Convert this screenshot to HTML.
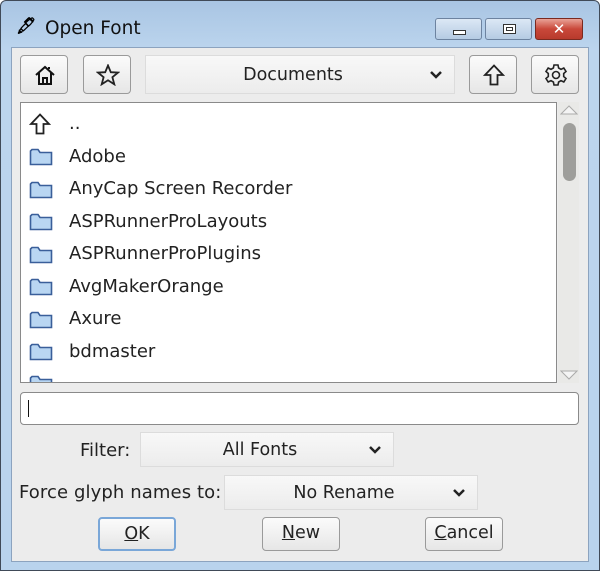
<!DOCTYPE html>
<html><head><style>
*{box-sizing:border-box;margin:0;padding:0}
body{width:600px;height:571px;overflow:hidden;font-family:"DejaVu Sans","Liberation Sans",sans-serif;background:#fff}
.win{position:absolute;left:0;top:0;width:600px;height:571px;border:1px solid #404a58;border-radius:6px 6px 0 0;background:linear-gradient(#a9c5e3,#bcd5ee 50px,#b9d3ed);}
.title{position:absolute;left:44px;top:17px;font-size:18.5px;color:#111}
.client{position:absolute;left:11px;top:47px;width:578px;height:515px;background:#ececec;border:1px solid #8ca3bf}
.abs{position:absolute}
.btn{position:absolute;border:1px solid #9a9a9a;border-radius:4px;background:linear-gradient(#fbfbfb,#e6e6e6);}
.combo{position:absolute;background:linear-gradient(#f8f8f8,#ececec);border:1px solid #dcdcdc;font-size:17.5px;color:#222;text-align:center;padding-right:14px}
.chev{position:absolute;right:12px;top:50%;margin-top:-4px}
.item{position:absolute;left:48px;font-size:18px;color:#222}
.fold{position:absolute;left:8px;width:24px;height:19px}
.pb{position:absolute;font-size:17.5px;color:#222;text-align:center;line-height:31px}
u{text-decoration:underline}
</style></head><body>
<div class="win">
 <div class="abs" style="left:15px;top:15px;font-size:16px;font-weight:bold">&#x1F58B;</div>
 <div class="title">Open Font</div>
 <div class="abs" style="left:434px;top:17px;width:47px;height:22px;border:1px solid #6d83a0;border-radius:3px;background:linear-gradient(#dce8f5,#b5cbe3)"><div class="abs" style="left:17px;top:11px;width:13px;height:5px;border:1px solid #333;background:#fff"></div></div>
 <div class="abs" style="left:484px;top:17px;width:47px;height:22px;border:1px solid #6d83a0;border-radius:3px;background:linear-gradient(#dce8f5,#b5cbe3)"><div class="abs" style="left:17px;top:5px;width:13px;height:10px;border:1px solid #333;background:#fff"><div class="abs" style="left:2px;top:2px;width:7px;height:4px;border:1px solid #333"></div></div></div>
 <div class="abs" style="left:534px;top:17px;width:48px;height:22px;border:1px solid #7a2a20;border-radius:3px;background:linear-gradient(#e9a397,#c9483a 50%,#b83a2c);color:#fff;font-weight:bold;font-size:15px;text-align:center;line-height:20px">✕</div>
</div>
<div class="client"></div>
<div class="btn" style="left:20px;top:55px;width:48px;height:39px"><svg class="abs" style="left:13px;top:8px" width="22" height="22" viewBox="0 0 22 22" fill="none" stroke="#111" stroke-width="2"><path d="M2 11 L11 3 L20 11 M5 9 V20 H17 V9 M9 20 V14 H13 V20 M15 5 V3"/></svg></div>
<div class="btn" style="left:83px;top:55px;width:48px;height:39px"><svg class="abs" style="left:12px;top:8px" width="24" height="22" viewBox="0 0 24 22" fill="none" stroke="#222" stroke-width="1.8"><path d="M12 1.5 L14.8 8.2 L22 8.6 L16.4 13.2 L18.3 20.3 L12 16.3 L5.7 20.3 L7.6 13.2 L2 8.6 L9.2 8.2 Z"/></svg></div>
<div class="combo" style="left:145px;top:55px;width:310px;height:39px;line-height:38px">Documents<svg class="chev" width="12" height="8" viewBox="0 0 12 8"><path d="M1 1 L6 6 L11 1" stroke="#222" stroke-width="2.5" fill="none"/></svg></div>
<div class="btn" style="left:469px;top:55px;width:48px;height:39px"><svg class="abs" style="left:13px;top:8px" width="22" height="22" viewBox="0 0 22 22" fill="none" stroke="#222" stroke-width="1.8"><path d="M11 1.5 L20 11 H14.5 V20.5 H7.5 V11 H2 Z"/></svg></div>
<div class="btn" style="left:531px;top:55px;width:48px;height:39px"><svg class="abs" style="left:12px;top:7px" width="24" height="24" viewBox="0 0 24 24" fill="none" stroke="#222" stroke-width="1.6"><path d="M10 2 H14 L14.6 5 L17 6.3 L19.8 5 L22 8.5 L19.7 10.5 V13.5 L22 15.5 L19.8 19 L17 17.7 L14.6 19 L14 22 H10 L9.4 19 L7 17.7 L4.2 19 L2 15.5 L4.3 13.5 V10.5 L2 8.5 L4.2 5 L7 6.3 L9.4 5 Z"/><circle cx="12" cy="12" r="3.5"/></svg></div>
<div class="abs" style="left:20px;top:102px;width:537px;height:281px;background:#fff;border:1px solid #8a8a8a;overflow:hidden">
 <svg class="abs" style="left:8px;top:10px" width="22" height="22" viewBox="0 0 22 22" fill="none" stroke="#222" stroke-width="1.8"><path d="M11 1.5 L20 11 H14.5 V20.5 H7.5 V11 H2 Z"/></svg>
 <div class="item" style="top:10px">..</div>
 <div class="item" style="top:43px">Adobe</div>
 <div class="item" style="top:75px">AnyCap Screen Recorder</div>
 <div class="item" style="top:108px">ASPRunnerProLayouts</div>
 <div class="item" style="top:140px">ASPRunnerProPlugins</div>
 <div class="item" style="top:173px">AvgMakerOrange</div>
 <div class="item" style="top:205px">Axure</div>
 <div class="item" style="top:238px">bdmaster</div>
 <svg width="0" height="0" style="position:absolute"><defs><g id="f"><path d="M1.5 4 V17.5 H22.5 V5.5 H11 L9 2.5 H3 Z" fill="#b9d6f2" stroke="#3a5f9a" stroke-width="1.6"/></g></defs></svg>
 <svg class="fold" style="top:44px" viewBox="0 0 24 19"><use href="#f"/></svg>
 <svg class="fold" style="top:77px" viewBox="0 0 24 19"><use href="#f"/></svg>
 <svg class="fold" style="top:109px" viewBox="0 0 24 19"><use href="#f"/></svg>
 <svg class="fold" style="top:142px" viewBox="0 0 24 19"><use href="#f"/></svg>
 <svg class="fold" style="top:174px" viewBox="0 0 24 19"><use href="#f"/></svg>
 <svg class="fold" style="top:207px" viewBox="0 0 24 19"><use href="#f"/></svg>
 <svg class="fold" style="top:239px" viewBox="0 0 24 19"><use href="#f"/></svg>
 <svg class="fold" style="top:271px" viewBox="0 0 24 19"><use href="#f"/></svg>
</div>
<div class="abs" style="left:558px;top:102px;width:21px;height:281px;background:#e9e9e7"></div>
<svg class="abs" style="left:560px;top:104px" width="18" height="12" viewBox="0 0 18 12"><path d="M1 10 L9 2 L17 10 Z" fill="#f4f4f4" stroke="#aaa"/></svg>
<div class="abs" style="left:563px;top:123px;width:13px;height:58px;border-radius:7px;background:#9e9e9b"></div>
<svg class="abs" style="left:560px;top:369px" width="18" height="12" viewBox="0 0 18 12"><path d="M1 2 L9 10 L17 2 Z" fill="#f4f4f4" stroke="#aaa"/></svg>
<div class="abs" style="left:20px;top:392px;width:559px;height:33px;background:#fff;border:1px solid #8a8a8a;border-radius:4px"><div class="abs" style="left:7px;top:7px;width:1px;height:17px;background:#111"></div></div>
<div class="abs" style="left:80px;top:440px;font-size:18px;color:#222">Filter:</div>
<div class="combo" style="left:140px;top:432px;width:254px;height:35px;line-height:34px">All Fonts<svg class="chev" width="12" height="8" viewBox="0 0 12 8"><path d="M1 1 L6 6 L11 1" stroke="#222" stroke-width="2.5" fill="none"/></svg></div>
<div class="abs" style="left:19px;top:482px;font-size:18px;color:#222;letter-spacing:0.1px">Force glyph names to:</div>
<div class="combo" style="left:224px;top:475px;width:254px;height:35px;line-height:34px">No Rename<svg class="chev" width="12" height="8" viewBox="0 0 12 8"><path d="M1 1 L6 6 L11 1" stroke="#222" stroke-width="2.5" fill="none"/></svg></div>
<div class="btn pb" style="left:98px;top:517px;width:78px;height:34px;border:2px solid #7aa7d8"><u>O</u>K</div>
<div class="btn pb" style="left:262px;top:517px;width:78px;height:34px"><u>N</u>ew</div>
<div class="btn pb" style="left:425px;top:517px;width:78px;height:34px"><u>C</u>ancel</div>
</body></html>
